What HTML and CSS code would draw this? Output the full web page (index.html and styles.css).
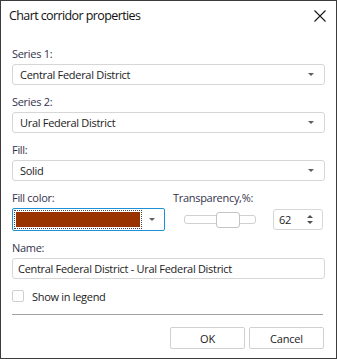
FILE: index.html
```html
<!DOCTYPE html>
<html lang="en">
<head>
    <meta charset="UTF-8">
    <title>Chart corridor properties</title>
    <link rel="stylesheet" href="styles.css">
</head>
<body>
    <div class="dialog">
        <div class="titlebar">
            <span class="title">Chart corridor properties</span>
            <svg class="close" width="12" height="12" viewBox="0 0 12 12">
                <path d="M0.5 0.5 L11.5 11.5 M11.5 0.5 L0.5 11.5" stroke="#1a1a1a" stroke-width="1.1" fill="none"/>
            </svg>
        </div>

        <div class="content">
            <div class="field">
                <label>Series 1:</label>
                <div class="combo"><span>Central Federal District</span><i class="arrow"></i></div>
            </div>
            <div class="field">
                <label>Series 2:</label>
                <div class="combo"><span>Ural Federal District</span><i class="arrow"></i></div>
            </div>
            <div class="field">
                <label>Fill:</label>
                <div class="combo"><span>Solid</span><i class="arrow"></i></div>
            </div>

            <div class="row">
                <div class="field color-field">
                    <label>Fill color:</label>
                    <div class="combo color-combo">
                        <div class="swatch-focus"><div class="swatch"></div></div>
                        <i class="arrow"></i>
                    </div>
                </div>
                <div class="field">
                    <label>Transparency,%:</label>
                    <div class="trans">
                        <div class="slider">
                            <div class="track"></div>
                            <div class="thumb"></div>
                        </div>
                        <div class="spin">
                            <span>62</span>
                            <div class="spin-btns"><i class="up"></i><i class="down"></i></div>
                        </div>
                    </div>
                </div>
            </div>

            <div class="field">
                <label>Name:</label>
                <div class="combo text-input"><span>Central Federal District - Ural Federal District</span></div>
            </div>

            <div class="check">
                <span class="box"></span>
                <span>Show in legend</span>
            </div>

            <div class="separator"></div>

            <div class="buttons">
                <button class="btn">OK</button>
                <button class="btn">Cancel</button>
            </div>
        </div>
    </div>
</body>
</html>
```

FILE: styles.css
```css
body {
    margin: 0;
    padding: 0;
    font-family: "Open Sans", "Noto Sans", sans-serif;
    background-color: #fff;
}
.dialog {
    width: 337px;
    height: 359px;
    box-sizing: border-box;
    border: 1px solid #3c3c3c;
    background-color: #fff;
}
.titlebar {
    height: 45px;
    display: flex;
    justify-content: space-between;
    align-items: flex-start;
    padding: 6px 10px 0 8px;
    box-sizing: border-box;
}
.title {
    font-size: 12.5px;
    color: #111;
    letter-spacing: -0.6px;
}
.close {
    margin-top: 3px;
}
.content {
    padding: 0 11px;
    font-size: 11px;
    letter-spacing: -0.3px;
    color: #222;
}
.field {
    display: flex;
    flex-direction: column;
    margin-bottom: 9px;
}
label {
    display: block;
    line-height: 16px;
    height: 16px;
    margin-bottom: 2px;
    color: #33334d;
}
.combo {
    height: 21px;
    box-sizing: border-box;
    border: 1px solid #d6d6d6;
    border-radius: 3px;
    display: flex;
    align-items: center;
    padding: 0 10px 0 7px;
    color: #222;
}
.combo span {
    flex: 1;
}
.text-input {
    padding-left: 5px;
}
.arrow {
    width: 0;
    height: 0;
    border-left: 3px solid transparent;
    border-right: 3px solid transparent;
    border-top: 3px solid #606060;
}
.row {
    display: flex;
    gap: 8px;
}
.color-field {
    width: 153px;
}
.color-combo {
    height: 23px;
    border-color: #1e90d6;
    border-radius: 2px;
    padding: 1px 9px 1px 1px;
    gap: 7px;
}
.swatch-focus {
    flex: 1;
    height: 100%;
    box-sizing: border-box;
    border: 1px dotted #444;
    padding: 1px;
}
.swatch {
    height: 100%;
    background-color: #993300;
}
.trans {
    display: flex;
    align-items: center;
    height: 23px;
}
.slider {
    position: relative;
    width: 72px;
    height: 16px;
    margin-left: 11px;
    display: flex;
    align-items: center;
}
.track {
    width: 100%;
    height: 9px;
    box-sizing: border-box;
    border: 1px solid #d0d0d0;
    border-radius: 3px;
}
.thumb {
    position: absolute;
    left: 32px;
    top: 0;
    width: 24px;
    height: 16px;
    box-sizing: border-box;
    border: 1px solid #c4c4c4;
    border-radius: 3px;
    background-color: #fff;
}
.spin {
    margin-left: 17px;
    width: 50px;
    height: 21px;
    box-sizing: border-box;
    border: 1px solid #d6d6d6;
    border-radius: 3px;
    display: flex;
    align-items: center;
    padding: 0 9px 0 5px;
}
.spin span {
    flex: 1;
}
.spin-btns {
    display: flex;
    flex-direction: column;
    gap: 3px;
}
.up, .down {
    width: 0;
    height: 0;
    border-left: 3px solid transparent;
    border-right: 3px solid transparent;
}
.up {
    border-bottom: 3px solid #505050;
}
.down {
    border-top: 3px solid #505050;
}
.check {
    display: flex;
    align-items: center;
    gap: 8px;
    height: 16px;
    margin-top: 3px;
}
.box {
    width: 12px;
    height: 12px;
    box-sizing: border-box;
    border: 1px solid #d0d0d0;
    border-radius: 2px;
}
.separator {
    height: 1px;
    background-color: #a0a0a0;
    margin: 10px 2px 12px 0;
}
.buttons {
    display: flex;
    justify-content: flex-end;
    gap: 4px;
    padding-right: 1px;
}
.btn {
    width: 75px;
    height: 22px;
    box-sizing: border-box;
    border: 1px solid #d0d0d0;
    border-radius: 2px;
    background-color: #fff;
    font-family: inherit;
    font-size: 11px;
    letter-spacing: -0.2px;
    color: #222;
    padding: 0;
}
```
